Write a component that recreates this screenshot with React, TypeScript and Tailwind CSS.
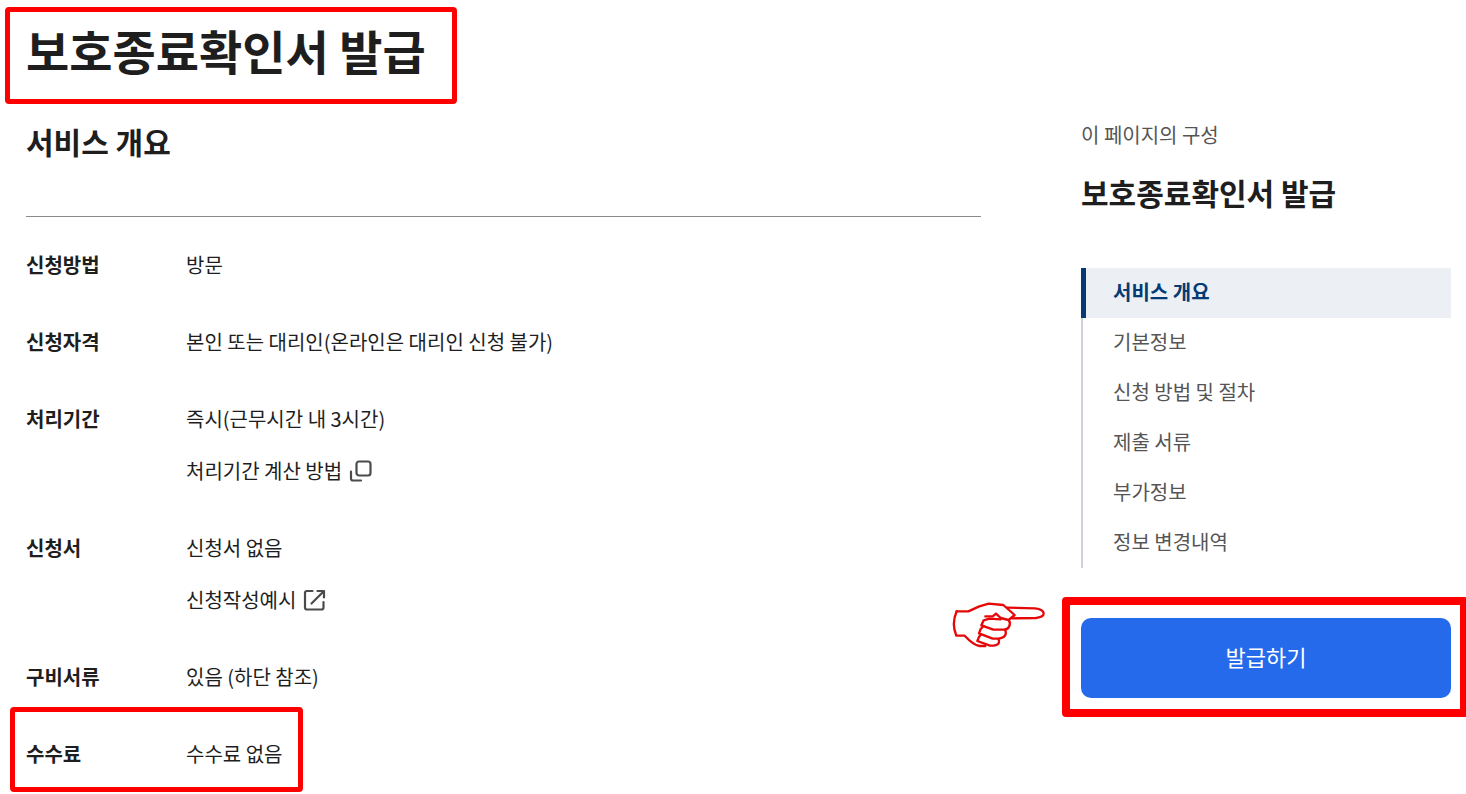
import type { ReactNode } from 'react';

const sections = ['서비스 개요', '기본정보', '신청 방법 및 절차', '제출 서류', '부가정보', '정보 변경내역'];

function CopyIcon() {
  return (
    <svg className="size-6 shrink-0" viewBox="0 0 24 24" fill="none" stroke="#4b4b4b" strokeWidth="2.200" strokeLinecap="round" aria-hidden="true">
      <rect x="7.500" y="2.500" width="14" height="14" rx="2.500" />
      <path d="M2 12.500v7a2 2 0 0 0 2 2h8" />
    </svg>
  );
}

function ExternalIcon() {
  return (
    <svg className="size-6 shrink-0" viewBox="0 0 24 24" fill="none" stroke="#4b4b4b" strokeWidth="2.200" strokeLinecap="round" strokeLinejoin="round" aria-hidden="true">
      <path d="M9.500 3H4a2 2 0 0 0-2 2v14.500a2 2 0 0 0 2 2h14.500a2 2 0 0 0 2-2V14" />
      <path d="M14.500 3H21v6.500M20.500 3.500 8.500 15.500" />
    </svg>
  );
}

function PointingHand() {
  return (
    <svg className="absolute -left-[131px] -top-[18px] h-[50px] w-24" viewBox="60 30 288 150" fill="none" stroke="#e60808" strokeWidth="7" strokeLinejoin="round" strokeLinecap="round" aria-hidden="true">
      <path d="M80 64H115L148 49 176 41 220 45 254 75 236 90 212 84 198 71 188 79 166 79" />
      <path d="M80 64C68 92 70 116 79 137H104C116 150 131 165 149 168L166 168" />
      <path d="M231 53 315 55C348 59 350 80 318 84L247 85" />
      <path d="M212 88 178 86 161 91 154 106 190 119H222C240 118 243 98 236 91" />
      <path d="M161 108 152 117 147 130 188 146H206C226 143 230 134 226 120" />
      <path d="M153 133 147 141 142 153 180 167H192C208 164 210 155 205 147" />
    </svg>
  );
}

function Highlight({ className }: { className: string }) {
  return <span aria-hidden="true" className={`pointer-events-none absolute border-[#ff0000] ${className}`} />;
}

function Row({ label, children }: { label: string; children: ReactNode }) {
  return (
    <div className="relative flex">
      <dt className="w-40 shrink-0 font-bold">{label}</dt>
      <dd className="flex flex-col items-start gap-5">{children}</dd>
    </div>
  );
}

export default function App() {
  return (
    <div className="overflow-hidden bg-white pb-6 pl-[26px] pr-[15px] font-['Noto_Sans_CJK_KR','Noto_Sans',sans-serif] text-xl/8 text-[#1e1e1e]">
      <header className="flex pt-[7px]">
        <h1 className="-ml-[21px] rounded-sm border-[5px] border-[#ff0000] pb-4 pl-4 pr-[26px] pt-1 text-[47px]/[67px] font-bold">
          보호종료확인서 발급
        </h1>
      </header>
      <div className="flex gap-[100px] pt-[15px]">
        <main className="min-w-0 flex-1">
          <h2 className="border-b border-[#8a8a8a] pb-[53px] text-3xl/[44px] font-bold">서비스 개요</h2>
          <dl className="flex flex-col gap-[45px] pt-8">
            <Row label="신청방법">방문</Row>
            <Row label="신청자격">본인 또는 대리인(온라인은 대리인 신청 불가)</Row>
            <Row label="처리기간">
              <span>즉시(근무시간 내 3시간)</span>
              <a href="#period" className="flex items-center gap-[7px]">처리기간 계산 방법<CopyIcon /></a>
            </Row>
            <Row label="신청서">
              <span>신청서 없음</span>
              <a href="#example" className="flex items-center gap-[7px]">신청작성예시<ExternalIcon /></a>
            </Row>
            <Row label="구비서류">있음 (하단 참조)</Row>
            <Row label="수수료">
              수수료 없음
              <Highlight className="-left-4 -top-[31px] h-[85px] w-[293px] rounded-sm border-[5px]" />
            </Row>
          </dl>
        </main>
        <aside className="w-[370px] shrink-0">
          <p className="text-[#555]">이 페이지의 구성</p>
          <h2 className="pt-[19px] text-3xl/[44px] font-bold">보호종료확인서 발급</h2>
          <nav className="pt-[54px]">
            <ul>
              {sections.map((name, i) => (
                <li key={name}>
                  <a
                    href={`#section-${i}`}
                    className={
                      i === 0
                        ? 'flex h-[50px] items-center border-l-[5px] border-[#063a74] bg-[#ecf0f5] pb-0.5 pl-[27px] font-bold text-[#063a74]'
                        : 'flex h-[50px] items-center border-l-2 border-[#cdd1d9] pb-0.5 pl-[30px] text-[#555]'
                    }
                  >
                    {name}
                  </a>
                </li>
              ))}
            </ul>
          </nav>
          <div className="relative mt-[50px]">
            <button type="button" className="block h-20 w-full rounded-[10px] bg-[#256aea] pb-1 text-[22px] text-white">발급하기</button>
            <Highlight className="-bottom-[19px] -left-[19px] -right-[17px] -top-[21px] rounded border-8" />
            <PointingHand />
          </div>
        </aside>
      </div>
    </div>
  );
}
